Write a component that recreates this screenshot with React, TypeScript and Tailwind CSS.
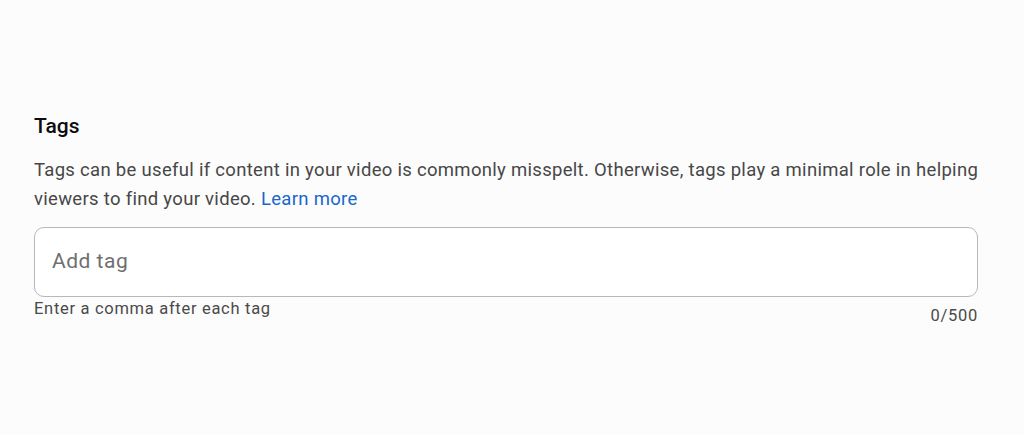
export default function App() {
  return (
    <div className="min-h-[435px] w-full bg-[#fcfcfc] font-['Roboto',sans-serif]">
      <div className="px-[34px] pt-[112px] pr-[46px]">
        <h2 className="text-[21px] leading-[28px] font-medium text-[#0d0d0d]">Tags</h2>
        <p className="mt-[16px] -mr-[6px] text-[18.5px] leading-[29px] tracking-[0.3px] text-[#474747]">
          Tags can be useful if content in your video is commonly misspelt. Otherwise, tags play a minimal role in
          helping viewers to find your video.{" "}
          <a href="#" className="text-[#1a66cc]">
            Learn more
          </a>
        </p>
        <div className="mt-[13px] flex h-[70px] items-center rounded-[10px] border border-[#b8b8b8] bg-white px-[17px]">
          <input
            type="text"
            placeholder="Add tag"
            className="w-full bg-transparent text-[21px] tracking-[0.5px] text-[#333] outline-none placeholder:text-[#6f6f6f]"
          />
        </div>
        <div className="flex justify-between text-[16.5px] tracking-[0.7px] text-[#4a4a4a]">
          <span className="mt-[1px] leading-[22px]">Enter a comma after each tag</span>
          <span className="mt-[8px] leading-[22px]">0/500</span>
        </div>
      </div>
    </div>
  );
}
